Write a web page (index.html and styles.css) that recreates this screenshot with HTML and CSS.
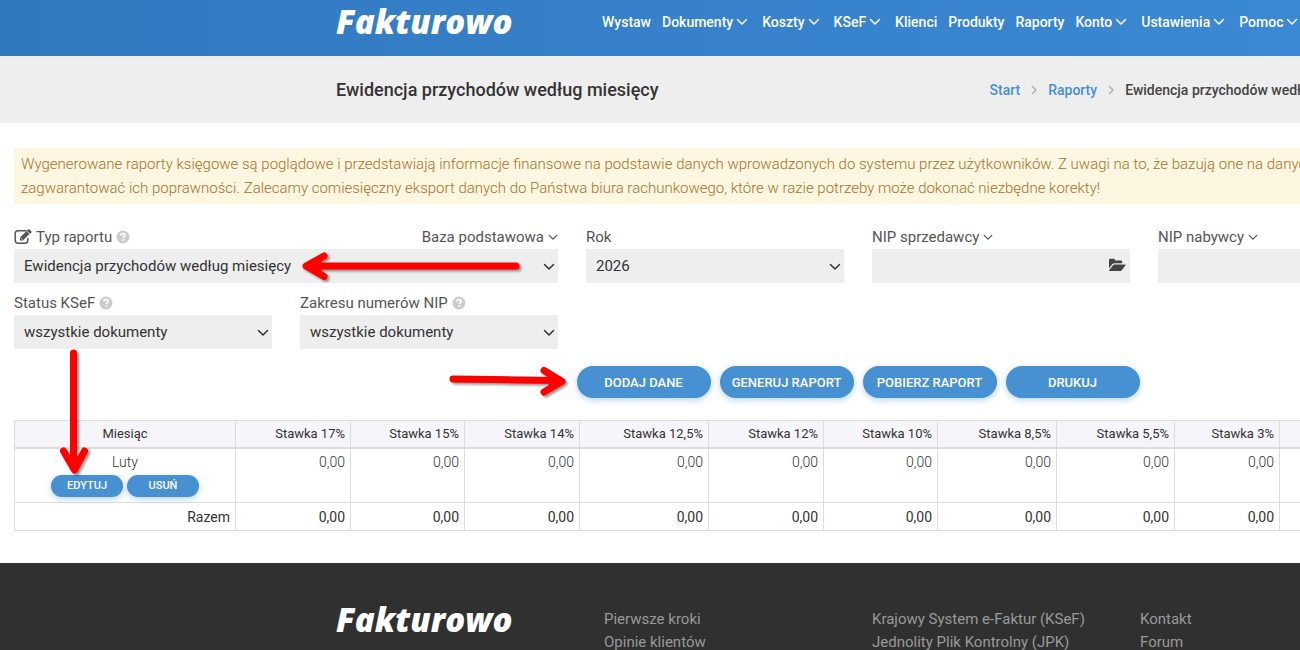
FILE: index.html
```html
<!DOCTYPE html>
<html lang="pl">
<head>
<meta charset="utf-8">
<title>Ewidencja przychodów według miesięcy</title>
<link rel="stylesheet" href="styles.css">
</head>
<body>
<svg class="sprite" aria-hidden="true">
  <symbol id="chev" viewBox="0 0 12 8"><path d="M1.500 1.500 6 6l4.500-4.500" fill="none" stroke="currentColor" stroke-width="1.500" stroke-linecap="round" stroke-linejoin="round"/></symbol>
  <symbol id="help" viewBox="0 0 14 14"><circle cx="7" cy="7" r="6.500" fill="#ccc"/><path d="M4.900 5.500C5 4.200 5.900 3.700 7 3.700c1.200 0 2.100.7 2.100 1.700 0 1.300-1.800 1.400-1.800 2.700" fill="none" stroke="#fff" stroke-width="1.700"/><rect x="6.400" y="9" width="1.800" height="1.700" fill="#fff"/></symbol>
</svg>
<div class="page">
  <header class="topbar">
    <div class="container topbar-inner">
      <a class="logo" href="#">Fakturowo</a>
      <nav class="menu">
        <a href="#">Wystaw</a>
        <a href="#">Dokumenty<svg><use href="#chev"/></svg></a>
        <a href="#">Koszty<svg><use href="#chev"/></svg></a>
        <a href="#">KSeF<svg><use href="#chev"/></svg></a>
        <a href="#">Klienci</a>
        <a href="#">Produkty</a>
        <a href="#">Raporty</a>
        <a href="#">Konto<svg><use href="#chev"/></svg></a>
        <a href="#">Ustawienia<svg><use href="#chev"/></svg></a>
        <a href="#">Pomoc<svg><use href="#chev"/></svg></a>
      </nav>
    </div>
  </header>
  <section class="titlebar">
    <div class="container titlebar-inner">
      <h1>Ewidencja przychodów według miesięcy</h1>
      <nav class="crumbs">
        <a href="#">Start</a>
        <svg viewBox="0 0 6 10"><path d="M1 1l4 4-4 4" fill="none" stroke="#aaa" stroke-width="1.300"/></svg>
        <a href="#">Raporty</a>
        <svg viewBox="0 0 6 10"><path d="M1 1l4 4-4 4" fill="none" stroke="#aaa" stroke-width="1.300"/></svg>
        <span>Ewidencja przychodów według miesięcy</span>
      </nav>
    </div>
  </section>
  <main class="content">
    <p class="notice">Wygenerowane raporty księgowe są poglądowe i przedstawiają informacje finansowe na podstawie danych wprowadzonych do systemu przez użytkowników. Z uwagi na to, że bazują one na danych<br>zagwarantować ich poprawności. Zalecamy comiesięczny eksport danych do Państwa biura rachunkowego, które w razie potrzeby może dokonać niezbędne korekty!</p>
    <form class="filters">
      <div class="field wide">
        <div class="caption">
          <svg class="edit" viewBox="0 0 18 16"><path d="M12 1.800H4.200Q1.200 1.800 1.200 4.800v6.400q0 3 3 3h6.600q3 0 3-3V9.500" fill="none" stroke="#555" stroke-width="1.500" stroke-linecap="round"/><path d="M6 8.500 13.400 1.100l3 3L9 11.500H6z" fill="#555"/><path d="M14 .6q.8-.8 1.600 0l1.700 1.700q.7.800 0 1.500l-.8.800-3.300-3.300z" fill="#555"/><path d="M12.600 1.900l3 3M7 9l1.600 1.600" stroke="#fff" stroke-width=".7"/></svg>
          <label for="typ">Typ raportu</label>
          <svg class="help"><use href="#help"/></svg>
          <a class="base" href="#">Baza podstawowa<svg><use href="#chev"/></svg></a>
        </div>
        <div class="control"><select id="typ"><option>Ewidencja przychodów według miesięcy</option></select><svg class="arrow"><use href="#chev"/></svg></div>
      </div>
      <div class="field">
        <div class="caption"><label for="rok">Rok</label></div>
        <div class="control"><select id="rok"><option>2026</option></select><svg class="arrow"><use href="#chev"/></svg></div>
      </div>
      <div class="field">
        <div class="caption"><label for="nips">NIP sprzedawcy<svg><use href="#chev"/></svg></label></div>
        <div class="control"><input id="nips" type="text"><svg class="folder" viewBox="0 0 18 14"><path d="M1 11.500V2q0-1.200 1.200-1.200h3.600Q7 .8 7 2v.5h6q1.200 0 1.200 1.200v1.500H6.500q-1.400 0-2.300 1L1 10.300z" fill="#444"/><path d="M1.400 13q-.8 0-.3-.8l4-5q.6-.8 1.600-.8h10.500q.8 0 .3.800l-3.700 5q-.6.800-1.600.8z" fill="#444"/></svg></div>
      </div>
      <div class="field">
        <div class="caption"><label for="nipn">NIP nabywcy<svg><use href="#chev"/></svg></label></div>
        <div class="control"><input id="nipn" type="text"></div>
      </div>
      <div class="field start">
        <div class="caption"><label for="ksef">Status KSeF</label><svg class="help"><use href="#help"/></svg></div>
        <div class="control"><select id="ksef"><option>wszystkie dokumenty</option></select><svg class="arrow"><use href="#chev"/></svg></div>
      </div>
      <div class="field">
        <div class="caption"><label for="zakres">Zakresu numerów NIP</label><svg class="help"><use href="#help"/></svg></div>
        <div class="control"><select id="zakres"><option>wszystkie dokumenty</option></select><svg class="arrow"><use href="#chev"/></svg></div>
      </div>
    </form>
    <div class="actions">
      <button class="btn">DODAJ DANE</button>
      <button class="btn">GENERUJ RAPORT</button>
      <button class="btn">POBIERZ RAPORT</button>
      <button class="btn">DRUKUJ</button>
    </div>
    <table class="report">
      <colgroup><col class="w221"><col class="w115"><col class="w114"><col class="w115"><col class="w129"><col class="w115"><col class="w114"><col class="w119"><col class="w118"><col class="w105"><col></colgroup>
      <thead>
        <tr><th>Miesiąc</th><th>Stawka 17%</th><th>Stawka 15%</th><th>Stawka 14%</th><th>Stawka 12,5%</th><th>Stawka 12%</th><th>Stawka 10%</th><th>Stawka 8,5%</th><th>Stawka 5,5%</th><th>Stawka 3%</th><th></th></tr>
      </thead>
      <tbody>
        <tr><td>Luty<div class="row-actions"><button class="btn small">EDYTUJ</button><button class="btn small">USUŃ</button></div></td><td>0,00</td><td>0,00</td><td>0,00</td><td>0,00</td><td>0,00</td><td>0,00</td><td>0,00</td><td>0,00</td><td>0,00</td><td></td></tr>
      </tbody>
      <tfoot>
        <tr><td>Razem</td><td>0,00</td><td>0,00</td><td>0,00</td><td>0,00</td><td>0,00</td><td>0,00</td><td>0,00</td><td>0,00</td><td>0,00</td><td></td></tr>
      </tfoot>
    </table>
  </main>
  <footer class="footer">
    <div class="container footer-inner">
      <a class="logo" href="#">Fakturowo</a>
      <div class="links"><a href="#">Pierwsze kroki</a><a href="#">Opinie klientów</a></div>
      <div class="links"><a href="#">Krajowy System e-Faktur (KSeF)</a><a href="#">Jednolity Plik Kontrolny (JPK)</a></div>
      <div class="links"><a href="#">Kontakt</a><a href="#">Forum</a></div>
    </div>
  </footer>
  <svg class="marks" viewBox="0 0 600 500" aria-hidden="true">
    <g fill="none" stroke="#fe0000" stroke-width="7" stroke-linecap="round" stroke-linejoin="round">
      <path d="M516 266H312M324 256l-18 10 18 10.500M318 261v10"/>
      <path d="M453 379l105 1.500M544 370.500l18 11-18 10.500M552 377v8"/>
      <path d="M73.500 353v108M63.500 451l11 19 10-19M69 460h10"/>
    </g>
  </svg>
</div>
</body>
</html>
```

FILE: styles.css
```css
* { box-sizing: border-box; }

body {
  margin: 0;
  overflow: hidden;
  background: #fff;
  color: #333;
  font-family: Roboto, "Liberation Sans", sans-serif;
  font-size: 15px;
}

a { color: inherit; text-decoration: none; }
.sprite { display: none; }

.page {
  position: relative;
  display: flex;
  flex-direction: column;
  min-width: 1716px;
  height: 100vh;
  overflow: hidden;
}

.container { width: 1044px; margin: 0 auto; }

.topbar { flex: none; height: 56px; background: linear-gradient(90deg, #3179bf, #3e8dda); }
.topbar-inner { display: flex; color: #fff; }

.logo {
  width: 240px;
  color: #fff;
  font-family: "Open Sans", sans-serif;
  font-size: 33px;
  font-style: italic;
  font-weight: 800;
  line-height: 44px;
}

.menu {
  display: flex;
  gap: 11px;
  padding-left: 26px;
  font-size: 14px;
  font-weight: 500;
  line-height: 44px;
  white-space: nowrap;
}
.menu svg { width: 12px; height: 8px; margin: 0 3px 1px 3px; }

.titlebar { flex: none; height: 67px; background: #eee; }
.titlebar-inner { display: flex; justify-content: space-between; align-items: center; height: 67px; }
.titlebar h1 { margin: 0; font-size: 18px; font-weight: 500; }
.crumbs { display: flex; align-items: center; gap: 11px; padding-right: 4px; font-weight: 500; font-size: 14px; color: #444; white-space: nowrap; }
.crumbs a { color: #4790d2; }
.crumbs svg { width: 6px; height: 10px; }

.content { flex: none; padding: 25px 14px 32px; }

.notice {
  margin: 0 0 21px;
  padding: 4px 7px;
  background: #fdf6e0;
  color: #a5732a;
  font-weight: 300;
  line-height: 24px;
  white-space: nowrap;
}

.filters { display: grid; grid-template-columns: repeat(auto-fill, 258px); gap: 8px 28px; }
.wide { grid-column: span 2; }
.start { grid-column-start: 1; }
.caption { display: flex; align-items: center; gap: 4px; height: 24px; color: #555; }
.caption a svg, .caption label svg { width: 10px; height: 7px; margin: 0 0 1px 4px; }
.caption .edit { width: 18px; height: 16px; }
.caption .help { width: 14px; height: 14px; }
.base { margin-left: auto; }

.control { position: relative; }
.control select, .control input {
  display: block;
  width: 100%;
  height: 34px;
  padding: 0 10px;
  border: 0;
  border-radius: 0;
  background: #eee;
  color: #333;
  font: inherit;
  appearance: none;
}
.arrow { position: absolute; right: 3px; top: 14px; width: 12px; height: 8px; }
.folder { position: absolute; right: 4px; top: 9px; width: 18px; height: 14px; }

.actions { display: flex; justify-content: center; gap: 9px; margin: 17px 0 22px; }
.btn {
  width: 134px;
  height: 32px;
  padding: 0;
  border: 0;
  border-radius: 16px;
  background: #4790d2;
  box-shadow: 0 2px 6px #4790d266;
  color: #fff;
  font-family: inherit;
  font-size: 13px;
  font-weight: 500;
  white-space: nowrap;
}
.small { width: 72px; height: 22px; font-size: 11px; }
.row-actions { display: flex; justify-content: center; gap: 4px; margin-top: 1px; }

.report { width: 100%; border-collapse: collapse; table-layout: fixed; }
.report th, .report td { padding: 0 5px; border: 1px solid #ddd; text-align: right; vertical-align: top; }
.report th { height: 27px; border-bottom-width: 2px; background: #f6f6fa; font-size: 13px; font-weight: 400; vertical-align: middle; }
.report th:first-child, .report tbody td:first-child { text-align: center; }
.report tbody td { height: 55px; padding-top: 1px; font-size: 14px; font-weight: 300; line-height: 24px; }
.report tfoot td { height: 28px; font-size: 14px; vertical-align: middle; }
.w221 { width: 221px; }
.w129 { width: 129px; }
.w119 { width: 119px; }
.w118 { width: 118px; }
.w115 { width: 115px; }
.w114 { width: 114px; }
.w105 { width: 105px; }

.footer { flex: 1; padding-top: 35px; background: #303030; color: #999; }
.footer-inner { display: grid; grid-template-columns: repeat(4, 240px); gap: 28px; }
.links { display: flex; flex-direction: column; padding-top: 10px; line-height: 23px; }

.marks { position: absolute; left: 0; top: 0; width: 600px; height: 500px; pointer-events: none; filter: drop-shadow(2px 2px 1px #0006); }
```
